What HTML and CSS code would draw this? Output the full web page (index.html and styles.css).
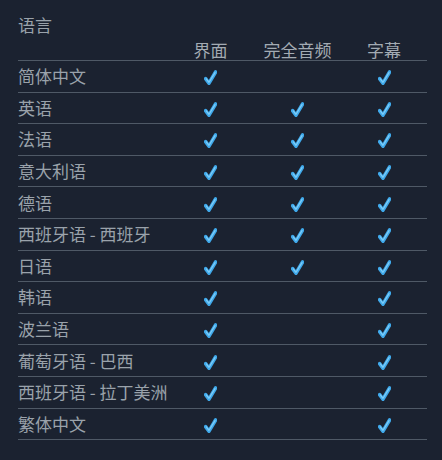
FILE: index.html
```html
<!DOCTYPE html>
<html lang="zh-CN">
<head>
<meta charset="utf-8">
<title>语言</title>
<link rel="stylesheet" href="styles.css">
</head>
<body>
<svg width="0" height="0" class="defs" aria-hidden="true">
  <defs>
    <symbol id="chk" viewBox="0 0 13 15">
      <path d="M1.6 8.6 L5 13.2 L11.6 2" fill="none" stroke="#3fa9eb" stroke-width="3.6" stroke-linecap="round" stroke-linejoin="round"/>
      <path d="M2.3 8.9 L5 12.3 L11 2.6" fill="none" stroke="#7fcdf7" stroke-width="1.2" stroke-linecap="round" stroke-linejoin="round"/>
    </symbol>
  </defs>
</svg>
<section class="languages">
  <h2 class="title">语言</h2>
  <div class="lang-table">
    <div class="row head">
      <div class="cell name"></div>
      <div class="cell">界面</div>
      <div class="cell">完全音频</div>
      <div class="cell">字幕</div>
    </div>
    <div class="row"><div class="cell name">简体中文</div><div class="cell"><svg class="check"><use href="#chk"/></svg></div><div class="cell"></div><div class="cell"><svg class="check"><use href="#chk"/></svg></div></div>
    <div class="row"><div class="cell name">英语</div><div class="cell"><svg class="check"><use href="#chk"/></svg></div><div class="cell"><svg class="check"><use href="#chk"/></svg></div><div class="cell"><svg class="check"><use href="#chk"/></svg></div></div>
    <div class="row"><div class="cell name">法语</div><div class="cell"><svg class="check"><use href="#chk"/></svg></div><div class="cell"><svg class="check"><use href="#chk"/></svg></div><div class="cell"><svg class="check"><use href="#chk"/></svg></div></div>
    <div class="row"><div class="cell name">意大利语</div><div class="cell"><svg class="check"><use href="#chk"/></svg></div><div class="cell"><svg class="check"><use href="#chk"/></svg></div><div class="cell"><svg class="check"><use href="#chk"/></svg></div></div>
    <div class="row"><div class="cell name">德语</div><div class="cell"><svg class="check"><use href="#chk"/></svg></div><div class="cell"><svg class="check"><use href="#chk"/></svg></div><div class="cell"><svg class="check"><use href="#chk"/></svg></div></div>
    <div class="row"><div class="cell name">西班牙语 - 西班牙</div><div class="cell"><svg class="check"><use href="#chk"/></svg></div><div class="cell"><svg class="check"><use href="#chk"/></svg></div><div class="cell"><svg class="check"><use href="#chk"/></svg></div></div>
    <div class="row"><div class="cell name">日语</div><div class="cell"><svg class="check"><use href="#chk"/></svg></div><div class="cell"><svg class="check"><use href="#chk"/></svg></div><div class="cell"><svg class="check"><use href="#chk"/></svg></div></div>
    <div class="row"><div class="cell name">韩语</div><div class="cell"><svg class="check"><use href="#chk"/></svg></div><div class="cell"></div><div class="cell"><svg class="check"><use href="#chk"/></svg></div></div>
    <div class="row"><div class="cell name">波兰语</div><div class="cell"><svg class="check"><use href="#chk"/></svg></div><div class="cell"></div><div class="cell"><svg class="check"><use href="#chk"/></svg></div></div>
    <div class="row"><div class="cell name">葡萄牙语 - 巴西</div><div class="cell"><svg class="check"><use href="#chk"/></svg></div><div class="cell"></div><div class="cell"><svg class="check"><use href="#chk"/></svg></div></div>
    <div class="row"><div class="cell name">西班牙语 - 拉丁美洲</div><div class="cell"><svg class="check"><use href="#chk"/></svg></div><div class="cell"></div><div class="cell"><svg class="check"><use href="#chk"/></svg></div></div>
    <div class="row"><div class="cell name">繁体中文</div><div class="cell"><svg class="check"><use href="#chk"/></svg></div><div class="cell"></div><div class="cell"><svg class="check"><use href="#chk"/></svg></div></div>
  </div>
</section>
</body>
</html>
```
FILE: styles.css
```css
html, body {
  margin: 0;
  padding: 0;
  background: #1b2230;
}
body {
  width: 442px;
  height: 460px;
  overflow: hidden;
  font-family: "Noto Sans CJK SC", "Noto Sans", sans-serif;
  color: #9aa2ab;
}
.defs {
  position: absolute;
  width: 0;
  height: 0;
}
.languages {
  padding: 15px 15px 0 18px;
}
.title {
  margin: 0;
  font-size: 17px;
  font-weight: normal;
  line-height: 20px;
  color: #9aa2ab;
}
.lang-table {
  width: 409px;
  display: flex;
  flex-direction: column;
}
.row {
  display: grid;
  grid-template-columns: 149px 87px 87px 86px;
  align-items: center;
  height: 31.6px;
  box-sizing: border-box;
  border-bottom: 1px solid #4f5966;
  font-size: 17px;
  line-height: 20px;
}
.row.head {
  height: 26px;
  align-items: end;
  padding-bottom: 0;
  color: #a3abb3;
}
.cell {
  text-align: center;
  display: flex;
  justify-content: center;
  align-items: center;
}
.cell.name {
  justify-content: flex-start;
  text-align: left;
  white-space: nowrap;
}
.check {
  width: 13px;
  height: 15px;
  margin-top: 3px;
}
```
